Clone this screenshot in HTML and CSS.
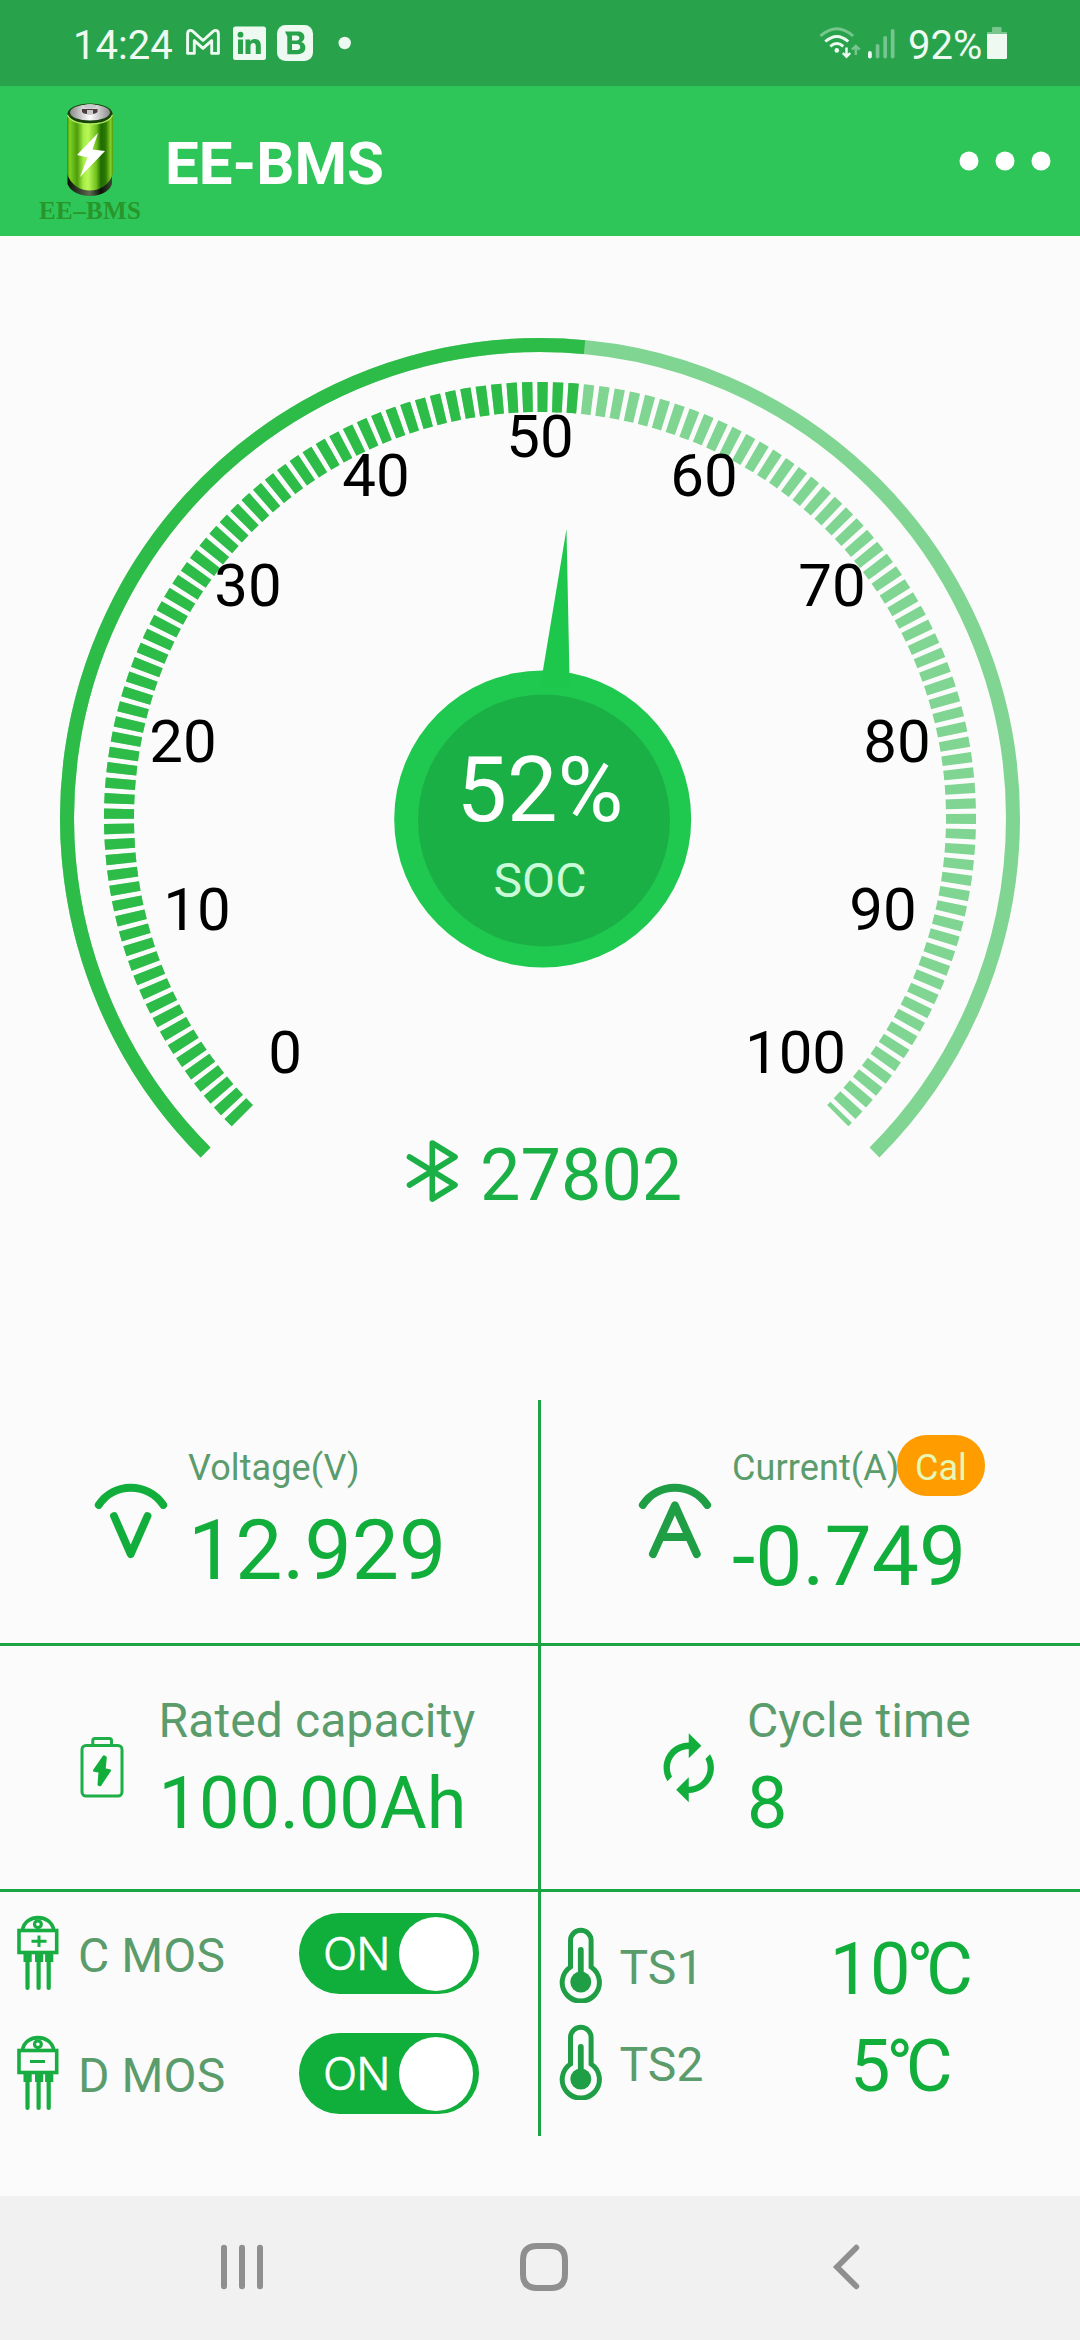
FILE: index.html
```html
<!DOCTYPE html>
<html lang="en">
<head>
<meta charset="utf-8">
<title>EE-BMS</title>
<link rel="stylesheet" href="styles.css">
</head>
<body>
<div class="status">
  <span class="status-text clock">14:24</span>
  <svg class="notif" width="172" height="86" viewBox="184 0 172 86">
    <path d="M187.6 53.4V34q0-3.6 3-3.6 1.200 0 2 .8L203 40.500 213.400 31.200q.8-.8 2-.8 3 0 3 3.600V53.400H211.700V40.600L203 48.300 194.300 40.600V53.400Z" fill="none" stroke="#eef9f1" stroke-width="2.900" stroke-linejoin="round"/>
    <rect x="233" y="26.500" width="33" height="33.500" rx="2.500" fill="#eef9f1"/>
    <g fill="#28a34c"><circle cx="240.500" cy="34.700" r="2.900"/><rect x="238" y="39.500" width="5" height="14.500"/><path d="M245.500 39.500h4.700v2c1-1.600 2.600-2.400 4.600-2.400 4.600 0 6 2.900 6 7.100V54h-5v-7.200c0-2-.4-3.700-2.500-3.700s-2.800 1.600-2.800 3.600V54h-5z"/></g>
    <rect x="277" y="25" width="36" height="36" rx="8.500" fill="#eef9f1"/>
    <path d="M285 31.400h12.500c4.300 0 6.900 2 6.900 5.600 0 2.400-1.200 4.100-3.200 5 2.600.8 4.200 2.800 4.200 5.600 0 4.200-3 6.600-7.800 6.600h-10.300V36.500zM292 35.500v5h4.400c1.900 0 3-.9 3-2.500s-1.100-2.500-3-2.500zm0 8.600v6h4.900c2.200 0 3.300-1.100 3.300-3s-1.200-3-3.300-3z" fill="#28a34c" fill-rule="evenodd"/>
    <circle cx="344.700" cy="43" r="6.200" fill="#eef9f1"/>
  </svg>
  <svg class="signal" width="80" height="86" viewBox="818 0 80 86">
    <g fill="none" stroke="#eef9f1" stroke-width="2.900">
      <path d="M820.500 36q16.300-14.500 32.600 0" opacity=".4"/>
      <path d="M825.300 41.500q11.500-10.200 23 0"/>
      <path d="M830.300 46.300q6.500-5.400 13 0"/>
    </g>
    <circle cx="836.800" cy="50.400" r="2.300" fill="#eef9f1"/>
    <path d="M846.500 47.500v9M842.800 53l3.700 3.800 3.700-3.800" fill="none" stroke="#eef9f1" stroke-width="2.500"/>
    <path d="M855.800 55v-9M852 49.700l3.800-3.800 3.800 3.800" fill="none" stroke="#eef9f1" stroke-width="2.500" opacity=".4"/>
    <g fill="#eef9f1"><rect x="868" y="51" width="3.800" height="7.500" rx="1.900"/><g opacity=".4"><rect x="875.700" y="44" width="3.700" height="14.500" rx="1.800"/><rect x="883.300" y="36" width="3.700" height="22.500" rx="1.800"/><rect x="890.800" y="29" width="3.700" height="29.500" rx="1.800"/></g></g>
  </svg>
  <span class="status-text percent">92%</span>
  <svg class="batt" width="20" height="86" viewBox="987 0 20 86">
    <path d="M987 34v-1.500q0-.5.500-.5H992v-4q0-1 1-1h7.500q1 0 1 1v4h5q.5 0 .5.500V34z" fill="#eef9f1" opacity=".4"/>
    <path d="M987 34h20v23.500q0 1.500-1.500 1.500h-17q-1.500 0-1.500-1.500z" fill="#eef9f1"/>
  </svg>
</div>

<header class="header">
  <svg class="logo" width="108" height="150" viewBox="36 86 108 150">
    <defs>
      <linearGradient id="can"><stop offset="0" stop-color="#3f8a08"/><stop offset=".06" stop-color="#7ed321"/><stop offset=".22" stop-color="#4d9c0c"/><stop offset=".36" stop-color="#a6ee45"/><stop offset=".46" stop-color="#b9f858"/><stop offset=".64" stop-color="#6fbf1c"/><stop offset=".74" stop-color="#1f6a02"/><stop offset=".84" stop-color="#2a7a04"/><stop offset=".95" stop-color="#86cf28"/><stop offset="1" stop-color="#4e9a10"/></linearGradient>
      <linearGradient id="base"><stop offset="0" stop-color="#0a0f06"/><stop offset=".5" stop-color="#5c6a52"/><stop offset=".75" stop-color="#0a0f06"/><stop offset="1" stop-color="#3b4a34"/></linearGradient>
      <linearGradient id="lid"><stop offset="0" stop-color="#8b8b8b"/><stop offset=".5" stop-color="#ffffff"/><stop offset="1" stop-color="#8b8b8b"/></linearGradient>
    </defs>
    <path d="M67.500 174V184c3 8 13 12 22.500 12s19.500-4 22-12v-10z" fill="url(#base)"/>
    <path d="M67 114h46v60c-4 11-13 16.500-23 16.500S71 185 67 174z" fill="url(#can)"/>
    <ellipse cx="90" cy="113.500" rx="22.500" ry="10" fill="#17430a"/>
    <path d="M67.500 115c3 6.500 12 9 22.500 9s19.500-2.500 22.500-9" fill="none" stroke="#b8ef6a" stroke-width="1.200"/>
    <ellipse cx="90" cy="112.500" rx="20" ry="8" fill="url(#lid)"/>
    <path d="M82 109v3c2 3 13 3 15.500 0v-3z" fill="#4c3c42"/><path d="M87 110h6v4.500h-6z" fill="#c8c8c8"/>
    <ellipse cx="90" cy="106.500" rx="6.500" ry="2.600" fill="#c9c9c9"/>
    <path d="M98 133 77 155l10.500 2.500L80 177l25-26-12.500-1.500z" fill="#fff"/>
    <text x="39" y="219" textLength="102" lengthAdjust="spacing" class="logo-text">EE–BMS</text>
  </svg>
  <h1 class="title">EE-BMS</h1>
  <svg class="menu" width="92" height="20" viewBox="0 0 92 20" fill="#fff"><circle cx="10" cy="10" r="9.500"/><circle cx="46" cy="10" r="9.500"/><circle cx="82" cy="10" r="9.500"/></svg>
</header>

<main class="main">
  <svg class="gauge" width="1080" height="930" viewBox="0 236 1080 930">
    <g fill="none" stroke="#80d592">
      <path stroke-width="14" d="M205.540 1152.460A473 473 0 1 1 874.460 1152.460"/>
      <path stroke-width="30" stroke-dasharray="10 4.988" d="M242.308 1115.692A421 421 0 1 1 837.692 1115.692"/>
    </g>
    <g fill="none" stroke="#2ebc49">
      <path stroke-width="14" d="M205.540 1152.460A473 473 0 0 1 584.512 347.099"/>
      <path stroke-width="30" stroke-dasharray="10 4.988" d="M242.308 1115.692A421 421 0 0 1 579.619 398.868"/>
    </g>
    <g class="scale">
      <text x="285" y="1073">0</text><text x="197" y="930">10</text><text x="183" y="762">20</text>
      <text x="248" y="606">30</text><text x="376" y="496">40</text><text x="540" y="457">50</text>
      <text x="704" y="496">60</text><text x="832" y="606">70</text><text x="897" y="762">80</text>
      <text x="883" y="930">90</text><text x="795.500" y="1073">100</text>
    </g>
    <circle cx="542.700" cy="819" r="148.500" fill="#1fc94f"/>
    <path d="M566.500 529 569.700 688H540z" fill="#1dc74c"/>
    <circle cx="544" cy="820.500" r="126" fill="#1bb045"/>
    <text class="soc-value" x="540" y="821">52%</text>
    <text class="soc-label" x="540" y="897">SOC</text>
  </svg>

  <div class="device">
    <svg class="bt" width="52" height="64" viewBox="406 1139 52 64"><path d="M409.500 1157 455 1185 432.300 1199V1143L455 1157 409.500 1185" fill="none" stroke="#1bb045" stroke-width="5.600" stroke-linecap="round" stroke-linejoin="round"/></svg>
    <span class="device-id">27802</span>
  </div>

  <section class="grid">
    <div class="cell left volt">
      <svg width="76" height="78" viewBox="93 1482 76 78" fill="none" stroke="#12ae3c" stroke-width="7.800" stroke-linecap="round" stroke-linejoin="round"><path d="M98.700 1505C114 1482 147.500 1482 163.300 1505M114 1516 130.700 1554.200 147.500 1516"/></svg>
      <div class="metric"><div class="label small">Voltage(V)</div><div class="value big">12.929</div></div>
    </div>
    <div class="cell amp">
      <svg width="76" height="78" viewBox="637 1482 76 78" fill="none" stroke="#209e46" stroke-width="7.800" stroke-linecap="round" stroke-linejoin="round"><path d="M642.800 1505C658 1482 691.500 1482 707.200 1505"/><path d="M653 1554 674.900 1505.500 696.700 1554M662 1537H688" stroke-width="8"/></svg>
      <div class="metric"><div class="label-row"><span class="label small">Current(A)</span><span class="pill">Cal</span></div><div class="value big">-0.749</div></div>
    </div>
    <div class="cell left rated">
      <svg width="46" height="64" viewBox="78.500 1735 46 64"><g fill="none" stroke="#1fae47" stroke-width="3"><rect x="81.500" y="1745.500" width="40" height="50.500" rx="4"/><path d="M92.300 1745.500V1740.500q0-2 2-2H109q2 0 2 2V1745.500"/></g><path d="M103.500 1756.500 105 1757.500 103.800 1769.500 109.200 1770.500 99.500 1785 98.300 1784.500 99.300 1771.500 93.800 1770.500z" fill="#12ae3c" stroke="#12ae3c" stroke-width="2.600" stroke-linejoin="round"/></svg>
      <div class="metric"><div class="label">Rated capacity</div><div class="value">100.00Ah</div></div>
    </div>
    <div class="cell cycle">
      <svg width="75.500" height="75.500" viewBox="0 0 24 24" fill="#12ae3c"><path d="M12 6v3l4-4-4-4v3c-4.420 0-8 3.580-8 8 0 1.570.46 3.030 1.240 4.260L6.700 14.800c-.45-.83-.7-1.790-.7-2.800 0-3.310 2.690-6 6-6zm6.760 1.740L17.300 9.200c.44.84.7 1.790.7 2.800 0 3.310-2.690 6-6 6v-3l-4 4 4 4v-3c4.420 0 8-3.580 8-8 0-1.570-.46-3.030-1.240-4.260z"/></svg>
      <div class="metric"><div class="label">Cycle time</div><div class="value">8</div></div>
    </div>
    <div class="cell left switches">
      <div class="mos">
        <svg width="44" height="76" viewBox="16 1915 44 76" fill="none" stroke="#17ad40"><path d="M22.500 1930C25 1913.500 51 1913.500 53.700 1930" stroke-width="3.600"/><rect x="19" y="1930.500" width="37.700" height="22" stroke-width="3.600"/><circle cx="37.900" cy="1924.300" r="3.400" stroke-width="3.200"/><path d="M31.500 1941.300H46.500M39 1935.500V1947" stroke-width="3"/><path d="M27.600 1954V1962M39.100 1954V1962M49.200 1954V1962" stroke-width="8.200"/><path d="M27.500 1962V1988M38.600 1962V1988M48.700 1962V1988" stroke-width="4.200" stroke-linecap="round"/></svg>
        <span class="label">C MOS</span>
        <div class="toggle"><span class="toggle-text">ON</span><span class="knob"></span></div>
      </div>
      <div class="mos">
        <svg width="44" height="76" viewBox="16 1915 44 76" fill="none" stroke="#17ad40"><path d="M22.500 1930C25 1913.500 51 1913.500 53.700 1930" stroke-width="3.600"/><rect x="19" y="1930.500" width="37.700" height="22" stroke-width="3.600"/><circle cx="37.900" cy="1924.300" r="3.400" stroke-width="3.200"/><path d="M30 1941.500H45" stroke-width="3"/><path d="M27.600 1954V1962M39.100 1954V1962M49.200 1954V1962" stroke-width="8.200"/><path d="M27.500 1962V1988M38.600 1962V1988M48.700 1962V1988" stroke-width="4.200" stroke-linecap="round"/></svg>
        <span class="label">D MOS</span>
        <div class="toggle"><span class="toggle-text">ON</span><span class="knob"></span></div>
      </div>
    </div>
    <div class="cell temps">
      <div class="temp">
        <svg width="46" height="76" viewBox="557.500 1927 46 76"><path d="M570 1967V1940.500a10.300 10.300 0 0 1 20.600 0V1967A18.600 18.600 0 1 1 570 1967Z" fill="none" stroke="#209e46" stroke-width="5"/><path d="M580.300 1950V1980" stroke="#209e46" stroke-width="5.800" stroke-linecap="round"/><circle cx="580.300" cy="1982" r="10.500" fill="#209e46"/></svg>
        <span class="label">TS1</span><span class="value">10<span class="unit">°C</span></span>
      </div>
      <div class="temp">
        <svg width="46" height="76" viewBox="557.500 1927 46 76"><path d="M570 1967V1940.500a10.300 10.300 0 0 1 20.600 0V1967A18.600 18.600 0 1 1 570 1967Z" fill="none" stroke="#209e46" stroke-width="5"/><path d="M580.300 1950V1980" stroke="#209e46" stroke-width="5.800" stroke-linecap="round"/><circle cx="580.300" cy="1982" r="10.500" fill="#209e46"/></svg>
        <span class="label">TS2</span><span class="value">5<span class="unit">°C</span></span>
      </div>
    </div>
  </section>
</main>

<nav class="nav">
  <svg width="42" height="46" viewBox="221 2244 42 46" stroke="#8f8f8f" stroke-width="6" stroke-linecap="round"><path d="M224 2247.700V2286.300M242 2247.700V2286.300M260 2247.700V2286.300"/></svg>
  <svg class="home" width="48" height="48" viewBox="0 0 48 48"><path d="M17 3H31Q45 3 45 17V31Q45 45 31 45H17Q3 45 3 31V17Q3 3 17 3Z" fill="none" stroke="#8f8f8f" stroke-width="6"/></svg>
  <svg class="back" width="28" height="46" viewBox="832 2244 28 46"><path d="M856.300 2247.700 837 2267 856.300 2286.300" fill="none" stroke="#8f8f8f" stroke-width="5.800" stroke-linecap="round"/></svg>
</nav>
</body>
</html>
```
FILE: styles.css
```css
* { box-sizing: border-box; }
body {
  margin: 0;
  width: 1080px;
  height: 2340px;
  display: flex;
  flex-direction: column;
  background: #fafbfa;
  font-family: Roboto, "Noto Sans CJK SC", sans-serif;
  overflow: hidden;
}
svg { display: block; flex: none; }

.status { height: 86px; display: flex; background: #28a34c; padding-left: 73px; }
.status-text { font-size: 40px; line-height: 91px; color: #eef9f1; white-space: nowrap; }
.clock { width: 111px; }
.signal { margin-left: 462px; }
.percent { width: 79px; margin-left: 10px; }

.header { height: 150px; display: flex; background: #2fc659; padding-left: 36px; }
.logo-text { font: bold 25px "Liberation Serif", serif; fill: #29962a; }
.title { margin: 0 0 0 21px; width: 795px; font-size: 60px; font-weight: 700; line-height: 155px; color: #fff; }
.menu { margin-top: 65px; margin-left: -1px; }

.main { flex: 1; display: flex; flex-direction: column; }
.scale { font-size: 60px; text-anchor: middle; fill: #000; }
.soc-value { font-size: 90px; text-anchor: middle; fill: #fff; }
.soc-label { font-size: 48px; text-anchor: middle; fill: #c9fbd8; }

.gauge { margin-bottom: -40px; }
.device { height: 274px; padding: 8px 0 0 406px; display: flex; gap: 22px; align-items: flex-start; }
.bt { margin-top: 5px; }
.device-id { font-size: 72px; line-height: 84px; color: #1bb045; }

.grid { display: grid; grid-template-columns: 541px 539px; grid-template-rows: 246px 246px 244px; }
.cell { display: flex; align-items: flex-start; border-bottom: 3px solid #1ba542; }
.left { border-right: 3px solid #1ba542; }
.switches, .temps { border-bottom: 0; flex-direction: column; }
.metric { display: flex; flex-direction: column; white-space: nowrap; }
.label { font-size: 48px; line-height: 56px; letter-spacing: .1px; color: #5a9c6c; white-space: nowrap; }
.small { font-size: 36px; line-height: 42px; }
.value { font-size: 72px; line-height: 84px; color: #12ae3c; white-space: nowrap; }
.big { font-size: 84px; line-height: 98px; }

.volt { padding: 47px 0 0 93px; gap: 19px; }
.volt svg { margin-top: 35px; }
.volt .metric { gap: 13px; }
.amp { padding: 35px 0 0 96px; gap: 19px; }
.amp svg { margin-top: 47px; }
.amp .metric { gap: 12px; }
.label-row { display: flex; height: 61px; }
.label-row .label { padding-top: 12px; width: 165px; }
.pill { width: 88px; height: 61px; border-radius: 30px; background: #ff9c00; color: #e6f8b4; font-size: 36px; line-height: 66px; text-align: center; }
.rated { padding: 47px 0 0 78.5px; gap: 34px; }
.rated svg { margin-top: 42px; }
.cycle { padding: 47px 0 0 109.500px; gap: 21px; }
.cycle svg { margin-top: 36.500px; }
.rated .metric, .cycle .metric { gap: 13px; }

.switches { padding: 21px 0 0 16px; gap: 39px; }
.mos { display: grid; grid-template-columns: 62px 221px 180px; height: 81px; }
.mos svg { margin-top: 2px; }
.mos .label { padding-top: 15px; }
.toggle { display: flex; align-items: center; height: 81px; border-radius: 41px; background: #10ae3b; padding: 0 6px 0 24px; justify-content: space-between; }
.toggle-text { font: 300 45px/81px Inter, sans-serif; color: #fff; letter-spacing: -1px; -webkit-text-stroke: .6px #fff; }
.knob { width: 74px; height: 74px; border-radius: 50%; background: #fff; }

.temps { padding: 24px 0 0 16.500px; }
.temp { display: grid; grid-template-columns: 62px 162px 1fr; width: 420px; height: 97px; align-items: start; }
.temp svg { margin-top: 11px; }
.temp .label { padding-top: 24px; }
.temp .value { padding-top: 12px; width: 232px; text-align: center; }
.unit { margin-left: -4px; letter-spacing: -7.5px; }

.nav { height: 144px; display: flex; align-items: center; background: #f1f1f1; padding: 0 0 2px 221px; }
.home { margin-left: 257px; }
.back { margin-left: 264px; }
```
